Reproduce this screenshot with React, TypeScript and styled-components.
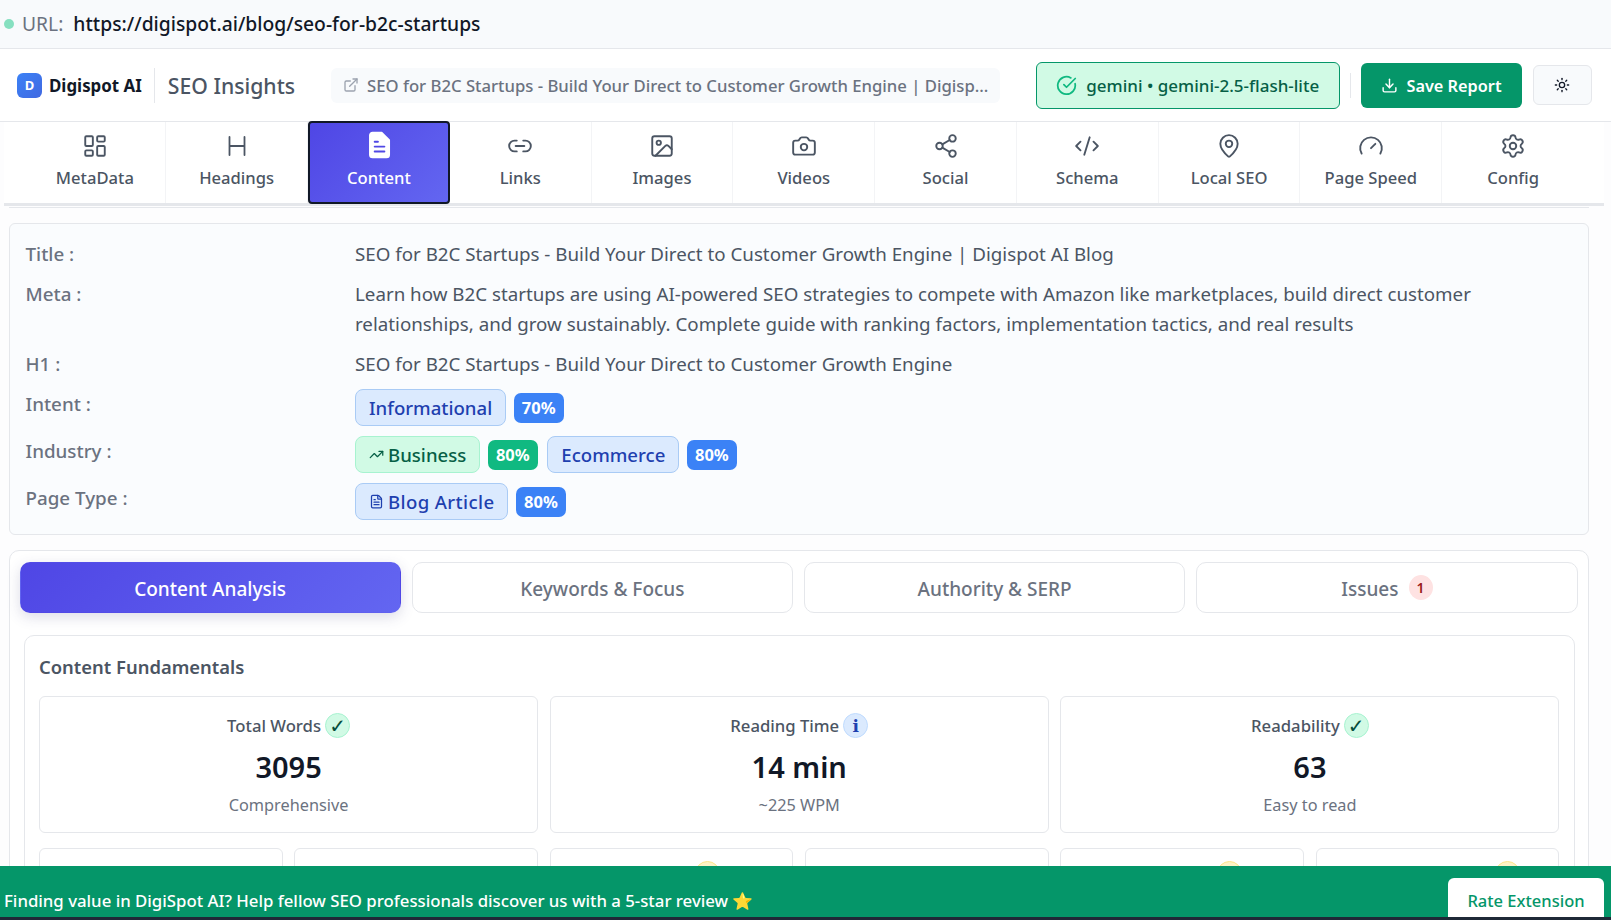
import React from "react";
import styled, { createGlobalStyle } from "styled-components";
import {
  LayoutDashboard,
  Link2,
  Image as ImageIcon,
  Camera,
  Share2,
  CodeXml,
  MapPin,
  Gauge,
  Settings,
  ExternalLink,
  CircleCheckBig,
  Download,
  Sun,
  TrendingUp,
  FileText,
} from "lucide-react";

const GlobalStyle = createGlobalStyle`
  html, body { margin: 0; padding: 0; background: #fff; }
  body { font-family: "Noto Sans", "Open Sans", Arial, sans-serif; }
  * { box-sizing: border-box; }
`;

const Page = styled.div`
  height: 100vh;
  display: flex;
  flex-direction: column;
  overflow: hidden;
  background: #fdfdfe;
  color: #4b5563;
`;

const UrlBar = styled.div`
  flex: none;
  height: 49px;
  padding-left: 4px;
  display: flex;
  align-items: center;
  background: #f8fafc;
  border-bottom: 1px solid #e5e7eb;
  font-size: 19.3px;
  line-height: 24px;
`;

const StatusDot = styled.span`
  width: 10px;
  height: 10px;
  border-radius: 50%;
  background: #86e0c0;
  margin-right: 8px;
`;

const UrlLabel = styled.span`
  color: #6b7280;
  margin-right: 10px;
`;

const UrlValue = styled.span`
  color: #111827;
  font-weight: 500;
`;

const Header = styled.header`
  flex: none;
  height: 73px;
  padding: 0 19.5px 0 17px;
  display: flex;
  align-items: center;
  background: #fff;
  border-bottom: 1px solid #e5e7eb;
`;

const LogoMark = styled.div`
  width: 25px;
  height: 25px;
  border-radius: 6px;
  background: linear-gradient(135deg, #3b82f6, #4169e1);
  color: #fff;
  font-size: 13px;
  font-weight: 700;
  display: flex;
  align-items: center;
  justify-content: center;
`;

const LogoText = styled.div`
  margin-left: 7px;
  font-size: 16.9px;
  font-weight: 700;
  color: #111827;
  white-space: nowrap;
`;

const HeaderDivider = styled.div`
  width: 1px;
  height: 35px;
  background: #e5e7eb;
  margin: 0 13px 0 12px;
`;

const Title = styled.div`
  font-size: 21.2px;
  font-weight: 500;
  color: #4b5563;
  white-space: nowrap;
`;

const PagePill = styled.div`
  margin-left: 36px;
  width: 669px;
  height: 35px;
  padding-left: 12px;
  border-radius: 6px;
  background: #f8fafc;
  display: flex;
  align-items: center;
  gap: 8px;
  color: #6b7280;
  font-size: 16.7px;
  font-weight: 500;
  white-space: nowrap;
  svg { color: #9ca3af; flex: none; }
`;

const RightGroup = styled.div`
  margin-left: auto;
  display: flex;
  align-items: center;
`;

const ModelBadge = styled.div`
  width: 304.5px;
  height: 47px;
  border-radius: 6px;
  background: #d1fae5;
  border: 1px solid #059669;
  color: #065f46;
  display: flex;
  align-items: center;
  justify-content: center;
  gap: 9px;
  font-size: 17px;
  font-weight: 500;
  white-space: nowrap;
  svg { color: #10b981; }
`;

const ActionDivider = styled.div`
  width: 1px;
  height: 25px;
  background: #e5e7eb;
  margin: 0 10px;
`;

const SaveButton = styled.button`
  width: 161px;
  height: 45px;
  padding-top: 2px;
  border: 0;
  border-radius: 6px;
  background: #059669;
  color: #fff;
  font: 600 16.3px "Noto Sans", sans-serif;
  display: flex;
  align-items: center;
  justify-content: center;
  gap: 8px;
`;

const ThemeButton = styled.button`
  margin-left: 10.5px;
  width: 59px;
  height: 40px;
  border: 1px solid #e5e7eb;
  border-radius: 6px;
  background: #f8fafc;
  color: #111827;
  display: flex;
  align-items: center;
  justify-content: center;
`;

const Nav = styled.nav`
  flex: none;
  height: 84px;
  margin: 0 7px 0 4px;
  padding: 0 20px 0 20.5px;
  display: grid;
  grid-template-columns: repeat(11, 1fr);
  border-bottom: 3px solid #e5e7eb;
  background: #fff;
`;

const NavItem = styled.div<{ $active?: boolean }>`
  display: flex;
  flex-direction: column;
  align-items: center;
  font-size: 16.6px;
  font-weight: 500;
  line-height: 24px;
  padding-top: 11px;
  gap: 7px;
  height: 81px;
  color: #4b5563;
  border-right: 1px solid #f3f4f6;
  &:last-child { border-right: 0; }
  svg { flex: none; }
  ${(p) =>
    p.$active &&
    `
    margin-top: -1px;
    height: 83px;
    padding-top: 8px;
    gap: 7px;
    color: #fff;
    background: linear-gradient(135deg, #4f46e5, #6366f1);
    border: 2px solid #111827;
    border-radius: 4px;
  `}
`;

const Main = styled.main`
  flex: 1;
  min-height: 0;
  overflow: hidden;
  padding: 0 22px 0 9px;
`;

const TopRule = styled.div`
  height: 1px;
  background: #e5e7eb;
  margin-top: 1px;
  margin-bottom: 15px;
`;

const InfoCard = styled.section`
  padding: 15px 15.5px 14px;
  background: #fafcfe;
  border: 1px solid #e5e7eb;
  border-radius: 6px;
  display: flex;
  flex-direction: column;
  gap: 10px;
`;

const InfoRow = styled.div`
  display: grid;
  grid-template-columns: 329.5px 1fr;
`;

const InfoLabel = styled.div`
  color: #6b7280;
  font-size: 18.8px;
  font-weight: 500;
  line-height: 30px;
`;

const InfoValue = styled.div`
  color: #4b5563;
  font-size: 18.75px;
  line-height: 30px;
`;

const Chips = styled.div`
  display: flex;
  align-items: center;
`;

const Chip = styled.div<{ $green?: boolean; $spread?: boolean }>`
  height: 37px;
  padding: 0 13px;
  display: flex;
  align-items: center;
  gap: 4px;
  border-radius: 8px;
  font-size: 18.6px;
  font-weight: 500;
  white-space: nowrap;
  letter-spacing: ${(p) => (p.$spread ? "0.38px" : "0")};
  background: ${(p) => (p.$green ? "#d1fae5" : "#dbeafe")};
  color: ${(p) => (p.$green ? "#065f46" : "#1e40af")};
  border: 1px solid ${(p) => (p.$green ? "#a7f3d0" : "#a9cbf5")};
`;

const Score = styled.div<{ $green?: boolean }>`
  height: 30px;
  width: 50px;
  margin: 0 9.5px 0 7.5px;
  border-radius: 7px;
  display: flex;
  align-items: center;
  justify-content: center;
  color: #fff;
  font-size: 16.5px;
  font-weight: 700;
  background: ${(p) => (p.$green ? "#10b981" : "#3b82f6")};
`;

const AnalysisCard = styled.section`
  margin-top: 15px;
  padding: 11px 10.5px 0 9.5px;
  background: #fff;
  border: 1px solid #e5e7eb;
  border-radius: 10px 10px 0 0;
  height: 420px;
`;

const SectionTabs = styled.div`
  display: grid;
  grid-template-columns: repeat(4, 1fr);
  gap: 11px;
`;

const SectionTab = styled.div<{ $active?: boolean }>`
  height: 51px;
  padding-top: 2px;
  border-radius: 10px;
  display: flex;
  align-items: center;
  justify-content: center;
  gap: 10px;
  font-size: 19px;
  font-weight: 500;
  color: ${(p) => (p.$active ? "#fff" : "#6b7280")};
  background: ${(p) => (p.$active ? "linear-gradient(135deg, #4f46e5, #6366f1)" : "#fff")};
  border: 1px solid ${(p) => (p.$active ? "transparent" : "#e5e7eb")};
  box-shadow: ${(p) => (p.$active ? "0 4px 14px rgba(60, 60, 120, 0.18)" : "none")};
`;

const CountBadge = styled.span`
  width: 24px;
  height: 25px;
  margin-bottom: 2px;
  border-radius: 50%;
  background: #fee2e2;
  color: #991b1b;
  font-size: 14px;
  font-weight: 600;
  display: flex;
  align-items: center;
  justify-content: center;
`;

const Fundamentals = styled.div`
  margin: 22px 2.5px 0 4px;
  padding: 18px 14.5px 0;
  height: 400px;
  border: 1px solid #e5e7eb;
  border-radius: 10px 10px 0 0;
`;

const SectionHeading = styled.h3`
  margin: 0 0 16px;
  font-size: 18.4px;
  line-height: 26px;
  font-weight: 600;
  color: #4b5563;
`;

const StatGrid = styled.div`
  display: grid;
  grid-template-columns: repeat(6, 1fr);
  gap: 15px 11.5px;
`;

const StatCard = styled.div<{ $wide?: boolean }>`
  grid-column: span ${(p) => (p.$wide ? 2 : 1)};
  height: ${(p) => (p.$wide ? "137px" : "100px")};
  padding-top: ${(p) => (p.$wide ? "16px" : "12px")};
  border: 1px solid #e5e7eb;
  border-radius: 6px;
  background: #fff;
  display: flex;
  flex-direction: column;
  align-items: center;
`;

const StatTitle = styled.div`
  display: flex;
  align-items: center;
  justify-content: center;
  gap: 4px;
  height: 25px;
  font-size: 16.7px;
  font-weight: 500;
  color: #4b5563;
`;

const StatusIcon = styled.span<{ $tone: "ok" | "info" | "warn"; $shift?: number }>`
  width: 25px;
  height: 25px;
  margin-left: ${(p) => (p.$shift ?? 0) * 2}px;
  border-radius: 50%;
  display: flex;
  align-items: center;
  justify-content: center;
  font-family: "DejaVu Sans", sans-serif;
  font-size: ${(p) => (p.$tone === "ok" ? "20px" : "17px")};
  font-weight: ${(p) => (p.$tone === "ok" ? 400 : 700)};
  background: ${(p) => ({ ok: "#d1fae5", info: "#dbeafe", warn: "#fef3c7" }[p.$tone])};
  border: 1px solid ${(p) => ({ ok: "#a7f3d0", info: "#bfdbfe", warn: "#fde68a" }[p.$tone])};
  color: ${(p) => ({ ok: "#064e3b", info: "#1e40af", warn: "#92400e" }[p.$tone])};
`;

const StatValue = styled.div`
  margin-top: 9px;
  font-size: 29px;
  line-height: 40px;
  font-weight: 600;
  color: #111827;
`;

const StatNote = styled.div`
  margin-top: 6px;
  font-size: 16.3px;
  line-height: 24px;
  color: #6b7280;
`;

const Banner = styled.footer`
  flex: none;
  height: 51px;
  padding: 12px 7px 0 4px;
  display: flex;
  justify-content: space-between;
  align-items: flex-start;
  overflow: hidden;
  background: #059669;
`;

const BannerText = styled.div`
  color: #fff;
  font-size: 16.8px;
  line-height: 46px;
  font-weight: 500;
  white-space: nowrap;
`;

const RateButton = styled.button`
  width: 156px;
  height: 45px;
  flex: none;
  border: 0;
  border-radius: 6px 6px 0 0;
  background: #fff;
  color: #059669;
  font: 500 16.5px "Noto Sans", sans-serif;
`;

const WindowEdge = styled.div`
  flex: none;
  height: 3px;
  background: #1f2937;
`;

const HeadingIcon = ({ size }: { size: number }) => (
  <svg width={size} height={size} viewBox="0 0 26 26" fill="none" stroke="currentColor" strokeWidth="1.8" strokeLinecap="round">
    <path d="M5.5 4v18M20.5 4v18M5.5 13h15" />
  </svg>
);

const FilledDoc = ({ size }: { size: number }) => (
  <svg width={size} height={size} viewBox="0 0 26 26" fill="none">
    <path d="M7 1.5h8.5L22.5 8.5V22a2.5 2.5 0 0 1-2.5 2.5H7A2.500 2.500 0 0 1 4.500 22V4A2.500 2.500 0 0 1 7 1.500Z" fill="#fff" stroke="#fff" strokeWidth="1.500" strokeLinejoin="round" />
    <path d="M9 10h3M9 14.500h9M9 19h9" stroke="#5048e5" strokeWidth="1.800" strokeLinecap="round" />
  </svg>
);

const navItems = [
  { label: "MetaData", icon: <LayoutDashboard size={26} strokeWidth={1.75} /> },
  { label: "Headings", icon: <HeadingIcon size={26} /> },
  { label: "Content", icon: <FilledDoc size={28} />, active: true },
  { label: "Links", icon: <Link2 size={26} strokeWidth={1.75} /> },
  { label: "Images", icon: <ImageIcon size={26} strokeWidth={1.75} /> },
  { label: "Videos", icon: <Camera size={26} strokeWidth={1.75} /> },
  { label: "Social", icon: <Share2 size={26} strokeWidth={1.75} /> },
  { label: "Schema", icon: <CodeXml size={26} strokeWidth={1.75} /> },
  { label: "Local SEO", icon: <MapPin size={26} strokeWidth={1.75} /> },
  { label: "Page Speed", icon: <Gauge size={26} strokeWidth={1.75} /> },
  { label: "Config", icon: <Settings size={26} strokeWidth={1.75} /> },
];

const wideStats = [
  { title: "Total Words", tone: "ok" as const, value: "3095", note: "Comprehensive" },
  { title: "Reading Time", tone: "info" as const, value: "14 min", note: "~225 WPM" },
  { title: "Readability", tone: "ok" as const, value: "63", note: "Easy to read" },
];

const glyphs = { ok: "✓", info: "ℹ" };

/* Lower row: the cards run on behind the banner; only the warning marks show. */
const warningShift = [null, null, 36, null, 47, 70];

export default function App() {
  return (
    <Page>
      <GlobalStyle />
      <UrlBar>
        <StatusDot />
        <UrlLabel>URL:</UrlLabel>
        <UrlValue>https://digispot.ai/blog/seo-for-b2c-startups</UrlValue>
      </UrlBar>

      <Header>
        <LogoMark>D</LogoMark>
        <LogoText>Digispot AI</LogoText>
        <HeaderDivider />
        <Title>SEO Insights</Title>
        <PagePill>
          <ExternalLink size={16} />
          SEO for B2C Startups - Build Your Direct to Customer Growth Engine | Digisp...
        </PagePill>
        <RightGroup>
          <ModelBadge>
            <CircleCheckBig size={21} />
            gemini • gemini-2.5-flash-lite
          </ModelBadge>
          <ActionDivider />
          <SaveButton>
            <Download size={17} />
            Save Report
          </SaveButton>
          <ThemeButton>
            <Sun size={16} />
          </ThemeButton>
        </RightGroup>
      </Header>

      <Nav>
        {navItems.map((item) => (
          <NavItem key={item.label} $active={item.active}>
            {item.icon}
            {item.label}
          </NavItem>
        ))}
      </Nav>

      <Main>
        <TopRule />
        <InfoCard>
          <InfoRow>
            <InfoLabel>Title :</InfoLabel>
            <InfoValue>SEO for B2C Startups - Build Your Direct to Customer Growth Engine | Digispot AI Blog</InfoValue>
          </InfoRow>
          <InfoRow>
            <InfoLabel>Meta :</InfoLabel>
            <InfoValue>
              Learn how B2C startups are using AI-powered SEO strategies to compete with Amazon like marketplaces, build direct customer relationships, and grow sustainably. Complete guide with ranking factors, implementation tactics, and real results
            </InfoValue>
          </InfoRow>
          <InfoRow>
            <InfoLabel>H1 :</InfoLabel>
            <InfoValue>SEO for B2C Startups - Build Your Direct to Customer Growth Engine</InfoValue>
          </InfoRow>
          <InfoRow>
            <InfoLabel>Intent :</InfoLabel>
            <Chips>
              <Chip>Informational</Chip>
              <Score>70%</Score>
            </Chips>
          </InfoRow>
          <InfoRow>
            <InfoLabel>Industry :</InfoLabel>
            <Chips>
              <Chip $green>
                <TrendingUp size={15} />
                Business
              </Chip>
              <Score $green>80%</Score>
              <Chip>Ecommerce</Chip>
              <Score>80%</Score>
            </Chips>
          </InfoRow>
          <InfoRow>
            <InfoLabel>Page Type :</InfoLabel>
            <Chips>
              <Chip $spread>
                <FileText size={15} />
                Blog Article
              </Chip>
              <Score>80%</Score>
            </Chips>
          </InfoRow>
        </InfoCard>

        <AnalysisCard>
          <SectionTabs>
            <SectionTab $active>Content Analysis</SectionTab>
            <SectionTab>Keywords &amp; Focus</SectionTab>
            <SectionTab>Authority &amp; SERP</SectionTab>
            <SectionTab>
              Issues <CountBadge>1</CountBadge>
            </SectionTab>
          </SectionTabs>

          <Fundamentals>
            <SectionHeading>Content Fundamentals</SectionHeading>
            <StatGrid>
              {wideStats.map((s) => (
                <StatCard key={s.title} $wide>
                  <StatTitle>
                    {s.title}
                    <StatusIcon $tone={s.tone}>{glyphs[s.tone]}</StatusIcon>
                  </StatTitle>
                  <StatValue>{s.value}</StatValue>
                  <StatNote>{s.note}</StatNote>
                </StatCard>
              ))}
              {warningShift.map((shift, i) => (
                <StatCard key={i}>{shift !== null && <StatusIcon $tone="warn" $shift={shift} />}</StatCard>
              ))}
            </StatGrid>
          </Fundamentals>
        </AnalysisCard>
      </Main>

      <Banner>
        <BannerText>Finding value in DigiSpot AI? Help fellow SEO professionals discover us with a 5-star review ⭐</BannerText>
        <RateButton>Rate Extension</RateButton>
      </Banner>
      <WindowEdge />
    </Page>
  );
}
